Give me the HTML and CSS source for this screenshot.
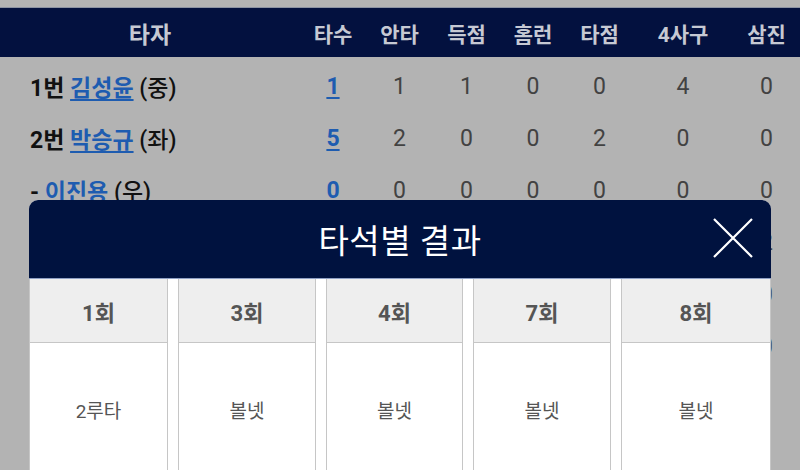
FILE: index.html
```html
<!DOCTYPE html>
<html lang="ko">
<head>
<meta charset="utf-8">
<link rel="stylesheet" href="styles.css">
</head>
<body>
<div class="page">
  <div class="topstrip"></div>
  <div class="grid thead">
    <div class="name-h">타자</div>
    <div>타수</div><div>안타</div><div>득점</div><div>홈런</div><div>타점</div><div>4사구</div><div>삼진</div>
  </div>
  <div class="rows">
    <div class="grid row">
      <div class="name"><b>1번</b> <a class="player">김성윤</a> <span class="pos">(중)</span></div>
      <div><a class="ab">1</a></div><div>1</div><div>1</div><div>0</div><div>0</div><div>4</div><div>0</div>
    </div>
    <div class="grid row">
      <div class="name"><b>2번</b> <a class="player">박승규</a> <span class="pos">(좌)</span></div>
      <div><a class="ab">5</a></div><div>2</div><div>0</div><div>0</div><div>2</div><div>0</div><div>0</div>
    </div>
    <div class="grid row">
      <div class="name"><b>-</b> <a class="player">이진용</a> <span class="pos">(우)</span></div>
      <div><a class="ab">0</a></div><div>0</div><div>0</div><div>0</div><div>0</div><div>0</div><div>0</div>
    </div>
    <div class="grid row">
      <div class="name"></div><div></div><div></div><div></div><div></div><div></div><div></div><div>2</div>
    </div>
    <div class="grid row">
      <div class="name"></div><div></div><div></div><div></div><div></div><div></div><div></div><div>0</div>
    </div>
    <div class="grid row">
      <div class="name"></div><div></div><div></div><div></div><div></div><div></div><div></div><div>0</div>
    </div>
  </div>
</div>

<div class="modal">
  <div class="modal-head">
    <h2 class="modal-title">타석별 결과</h2>
    <button class="close" aria-label="닫기">
      <svg width="40" height="40" viewBox="0 0 40 40"><path d="M1 1 L39 39 M39 1 L1 39" stroke="#ffffff" stroke-width="2.2" fill="none"/></svg>
    </button>
  </div>
  <div class="innings">
    <div class="inning"><div class="inn-h">1회</div><div class="inn-b">2루타</div></div>
    <div class="inning"><div class="inn-h">3회</div><div class="inn-b">볼넷</div></div>
    <div class="inning"><div class="inn-h">4회</div><div class="inn-b">볼넷</div></div>
    <div class="inning"><div class="inn-h">7회</div><div class="inn-b">볼넷</div></div>
    <div class="inning"><div class="inn-h">8회</div><div class="inn-b">볼넷</div></div>
  </div>
</div>
</body>
</html>
```

FILE: styles.css
```css
html, body {
  margin: 0;
  padding: 0;
}
body {
  width: 800px;
  height: 470px;
  overflow: hidden;
  background: #b3b3b3;
  font-family: "Roboto", "Noto Sans CJK KR", sans-serif;
  position: relative;
}
.page {
  background: #b3b3b3;
}
.topstrip {
  height: 7px;
  background: #b4b4b4;
  border-bottom: 1px solid #8c93a3;
}
.grid {
  display: grid;
  grid-template-columns: 300px 66px 67px 67px 66px 67px 100px 67px;
  align-items: center;
  text-align: center;
}
.thead {
  height: 49px;
  background: #03113f;
  color: #c6c9d3;
  font-weight: 700;
  font-size: 21px;
  font-family: "Roboto", "Noto Sans CJK KR", sans-serif;
}
.name-h {
  font-size: 23px;
}
.rows {
  padding-top: 3px;
}
.row {
  height: 52px;
  font-size: 23px;
  color: #424242;
}
.row .name {
  text-align: left;
  padding-left: 30px;
  font-family: "Roboto", "Noto Sans CJK KR", sans-serif;
  font-size: 23px;
  color: #111111;
  white-space: nowrap;
}
.row .name b {
  font-weight: 700;
}
.player {
  color: #1e5cb0;
  font-weight: 700;
  text-decoration: underline;
  text-underline-offset: 3px;
}
.pos {
  font-weight: 500;
}
.ab {
  color: #1e5cb0;
  font-weight: 700;
  text-decoration: underline;
  text-underline-offset: 3px;
}

.modal {
  position: absolute;
  left: 29px;
  top: 200px;
  width: 742px;
  height: 320px;
  background: #ffffff;
  border-radius: 9px 9px 0 0;
  overflow: hidden;
}
.modal-head {
  height: 78px;
  background: #00123f;
  display: flex;
  align-items: center;
  justify-content: center;
  position: relative;
}
.modal-title {
  margin: 0;
  color: #ffffff;
  font-family: "Roboto", "Noto Sans CJK KR", sans-serif;
  font-weight: 400;
  font-size: 33px;
  letter-spacing: 0.5px;
}
.close {
  position: absolute;
  right: 18px;
  top: 18px;
  width: 40px;
  height: 40px;
  padding: 0;
  border: 0;
  background: transparent;
  display: flex;
}
.innings {
  display: grid;
  grid-template-columns: 139px 138px 137px 138px 1fr;
  column-gap: 10px;
  border-top: 1px solid #8fa0c4;
}
.inning {
  border: 1px solid #c6c6c6;
  border-top: 0;
  display: flex;
  flex-direction: column;
  font-family: "Roboto", "Noto Sans CJK KR", sans-serif;
}
.inn-h {
  height: 63px;
  background: #eeeeee;
  border-bottom: 1px solid #c6c6c6;
  display: flex;
  align-items: center;
  justify-content: center;
  font-weight: 700;
  font-size: 22px;
  color: #555555;
}
.inn-b {
  height: 132px;
  display: flex;
  align-items: center;
  justify-content: center;
  font-size: 19px;
  color: #555555;
}
```
